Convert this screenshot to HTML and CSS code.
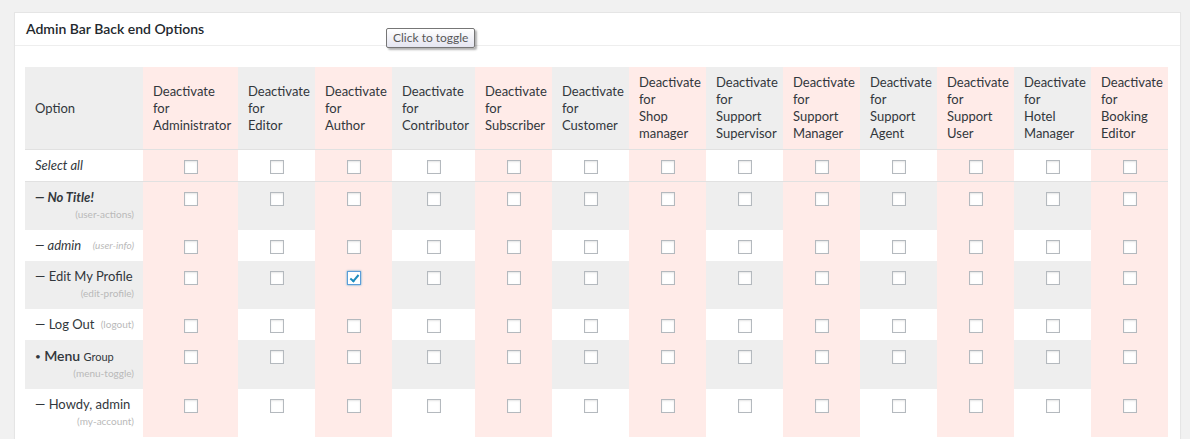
FILE: index.html
```html
<!DOCTYPE html>
<html lang="en">
<head>
    <meta charset="UTF-8">
    <meta name="viewport" content="width=device-width, initial-scale=1.0">
    <title>Admin Bar Back end Options</title>
    <link rel="stylesheet" href="styles.css">
</head>
<body>
    <div class="wrap">
        <div class="postbox">
            <h2 class="hndle">Admin Bar Back end Options</h2>
            <div class="tooltip">Click to toggle</div>
            <div class="inside">
                <table class="role-table">
                    <colgroup>
                        <col class="c-option">
                        <col class="c-admin">
                        <col class="c-role">
                        <col class="c-role">
                        <col class="c-contrib">
                        <col class="c-role">
                        <col class="c-role">
                        <col class="c-role">
                        <col class="c-role">
                        <col class="c-role">
                        <col class="c-role">
                        <col class="c-role">
                        <col class="c-role">
                        <col class="c-role">
                    </colgroup>
                    <thead>
                        <tr>
                            <th>Option</th>
                            <th>Deactivate<br>for<br>Administrator</th>
                            <th>Deactivate<br>for<br>Editor</th>
                            <th>Deactivate<br>for<br>Author</th>
                            <th>Deactivate<br>for<br>Contributor</th>
                            <th>Deactivate<br>for<br>Subscriber</th>
                            <th>Deactivate<br>for<br>Customer</th>
                            <th>Deactivate<br>for<br>Shop<br>manager</th>
                            <th>Deactivate<br>for<br>Support<br>Supervisor</th>
                            <th>Deactivate<br>for<br>Support<br>Manager</th>
                            <th>Deactivate<br>for<br>Support<br>Agent</th>
                            <th>Deactivate<br>for<br>Support<br>User</th>
                            <th>Deactivate<br>for<br>Hotel<br>Manager</th>
                            <th>Deactivate<br>for<br>Booking<br>Editor</th>
                        </tr>
                    </thead>
                    <tbody>
                        <tr class="select-all">
                            <td><em>Select all</em></td>
                            <td><input type="checkbox"></td><td><input type="checkbox"></td><td><input type="checkbox"></td>
                            <td><input type="checkbox"></td><td><input type="checkbox"></td><td><input type="checkbox"></td>
                            <td><input type="checkbox"></td><td><input type="checkbox"></td><td><input type="checkbox"></td>
                            <td><input type="checkbox"></td><td><input type="checkbox"></td><td><input type="checkbox"></td>
                            <td><input type="checkbox"></td>
                        </tr>
                        <tr>
                            <td><strong><em>— No Title!</em></strong><span class="node-id">(user-actions)</span></td>
                            <td><input type="checkbox"></td><td><input type="checkbox"></td><td><input type="checkbox"></td>
                            <td><input type="checkbox"></td><td><input type="checkbox"></td><td><input type="checkbox"></td>
                            <td><input type="checkbox"></td><td><input type="checkbox"></td><td><input type="checkbox"></td>
                            <td><input type="checkbox"></td><td><input type="checkbox"></td><td><input type="checkbox"></td>
                            <td><input type="checkbox"></td>
                        </tr>
                        <tr>
                            <td><em>— admin</em><span class="node-id inline"><em>(user-info)</em></span></td>
                            <td><input type="checkbox"></td><td><input type="checkbox"></td><td><input type="checkbox"></td>
                            <td><input type="checkbox"></td><td><input type="checkbox"></td><td><input type="checkbox"></td>
                            <td><input type="checkbox"></td><td><input type="checkbox"></td><td><input type="checkbox"></td>
                            <td><input type="checkbox"></td><td><input type="checkbox"></td><td><input type="checkbox"></td>
                            <td><input type="checkbox"></td>
                        </tr>
                        <tr>
                            <td>— Edit My Profile<span class="node-id">(edit-profile)</span></td>
                            <td><input type="checkbox"></td><td><input type="checkbox"></td><td><input type="checkbox" checked></td>
                            <td><input type="checkbox"></td><td><input type="checkbox"></td><td><input type="checkbox"></td>
                            <td><input type="checkbox"></td><td><input type="checkbox"></td><td><input type="checkbox"></td>
                            <td><input type="checkbox"></td><td><input type="checkbox"></td><td><input type="checkbox"></td>
                            <td><input type="checkbox"></td>
                        </tr>
                        <tr>
                            <td>— Log Out<span class="node-id inline">(logout)</span></td>
                            <td><input type="checkbox"></td><td><input type="checkbox"></td><td><input type="checkbox"></td>
                            <td><input type="checkbox"></td><td><input type="checkbox"></td><td><input type="checkbox"></td>
                            <td><input type="checkbox"></td><td><input type="checkbox"></td><td><input type="checkbox"></td>
                            <td><input type="checkbox"></td><td><input type="checkbox"></td><td><input type="checkbox"></td>
                            <td><input type="checkbox"></td>
                        </tr>
                        <tr>
                            <td><span class="group"><span class="bullet">•</span> <b>Menu</b> <small>Group</small></span><span class="node-id">(menu-toggle)</span></td>
                            <td><input type="checkbox"></td><td><input type="checkbox"></td><td><input type="checkbox"></td>
                            <td><input type="checkbox"></td><td><input type="checkbox"></td><td><input type="checkbox"></td>
                            <td><input type="checkbox"></td><td><input type="checkbox"></td><td><input type="checkbox"></td>
                            <td><input type="checkbox"></td><td><input type="checkbox"></td><td><input type="checkbox"></td>
                            <td><input type="checkbox"></td>
                        </tr>
                        <tr>
                            <td>— Howdy, admin<span class="node-id">(my-account)</span></td>
                            <td><input type="checkbox"></td><td><input type="checkbox"></td><td><input type="checkbox"></td>
                            <td><input type="checkbox"></td><td><input type="checkbox"></td><td><input type="checkbox"></td>
                            <td><input type="checkbox"></td><td><input type="checkbox"></td><td><input type="checkbox"></td>
                            <td><input type="checkbox"></td><td><input type="checkbox"></td><td><input type="checkbox"></td>
                            <td><input type="checkbox"></td>
                        </tr>
                    </tbody>
                </table>
            </div>
        </div>
    </div>
</body>
</html>
```

FILE: styles.css
```css
/* General Reset */
* {
    margin: 0;
    padding: 0;
    box-sizing: border-box;
}

body {
    background: #f1f1f1;
    color: #32373c;
    font-family: "Segoe UI", Lato, "Liberation Sans", sans-serif;
    font-size: 13px;
}

.wrap {
    padding: 12px 9px 0 14px;
}

.postbox {
    position: relative;
    background: #fff;
    border: 1px solid #e5e5e5;
    box-shadow: 0 1px 1px rgba(0, 0, 0, 0.04);
    min-height: 430px;
}

.postbox .hndle {
    font-size: 14px;
    font-weight: 600;
    line-height: 18px;
    padding: 7px 11px;
    color: #23282d;
    border-bottom: 1px solid #eee;
}

/* browser title tooltip */
.tooltip {
    position: absolute;
    top: 15px;
    left: 371px;
    padding: 1px 6px 2px;
    font-size: 12px;
    line-height: 15px;
    color: #575757;
    background: linear-gradient(#ffffff, #e4e5f0);
    border: 1px solid #767676;
    border-radius: 2px;
    box-shadow: 2px 2px 2px rgba(0, 0, 0, 0.3);
}

.inside {
    padding: 21px 12px 0 10px;
}

.role-table {
    table-layout: fixed;
    width: 1143px;
    border-collapse: collapse;
}

.c-option { width: 118px; }
.c-admin { width: 95px; }
.c-contrib { width: 83px; }
.c-role { width: 77px; }

.role-table th,
.role-table td {
    line-height: 17px;
    text-align: left;
}

.role-table th {
    font-weight: normal;
    vertical-align: middle;
    padding: 7px 2px 7px 10px;
    background: #eee;
}

.role-table td {
    vertical-align: top;
    padding: 7px 9px 7px 10px;
}

.role-table th:nth-child(even),
.role-table td:nth-child(even) {
    background: #ffebe8;
}

.role-table tbody tr:nth-child(even) {
    background: #eee;
}

.role-table tr.select-all td {
    border-top: 1px solid #e1e1e1;
    border-bottom: 1px solid #e1e1e1;
}

.node-id {
    display: block;
    text-align: right;
    font-size: 10px;
    color: #b9b9b9;
}

.node-id.inline {
    display: inline;
    float: right;
}

.group .bullet {
    font-size: 10px;
    vertical-align: 1px;
}

.group b {
    font-weight: 600;
    font-size: 14px;
}

.group small {
    font-size: 11px;
}

input[type="checkbox"] {
    appearance: none;
    display: block;
    position: relative;
    width: 14px;
    height: 14px;
    margin: 3px auto 0;
    background: #fff;
    border: 1px solid #b4b9be;
    box-shadow: inset 0 1px 2px rgba(0, 0, 0, 0.1);
}

input[type="checkbox"]:checked {
    border-color: #5b9dd9;
    box-shadow: 0 0 2px rgba(30, 140, 190, 0.8);
}

input[type="checkbox"]:checked::before {
    content: "";
    position: absolute;
    left: 4px;
    top: 1px;
    width: 3px;
    height: 7px;
    border-right: 2px solid #1e8cbe;
    border-bottom: 2px solid #1e8cbe;
    transform: rotate(40deg);
}
```
